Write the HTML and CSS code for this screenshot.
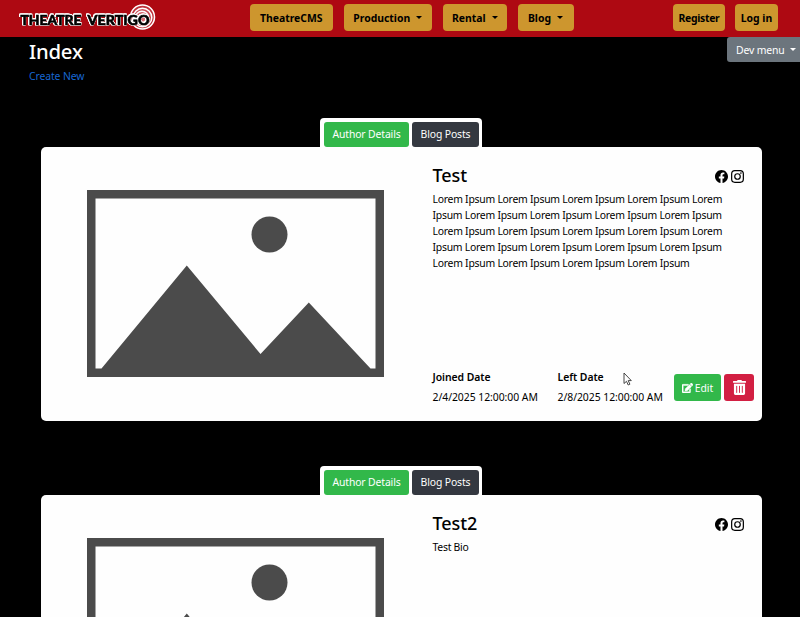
FILE: index.html
```
<!DOCTYPE html>
<html lang="en">
<head>
<meta charset="utf-8">
<title>Index - TheatreCMS</title>
<link rel="stylesheet" href="styles.css">
</head>
<body>
<svg class="sprite" aria-hidden="true">
  <symbol id="facebook" viewBox="0 0 16 16"><path d="M16 8.05C16 3.6 12.42 0 8 0S0 3.6 0 8.05C0 12.07 2.93 15.4 6.75 16v-5.62H4.72V8.05h2.03V6.28c0-2.02 1.2-3.13 3.02-3.13.88 0 1.79.16 1.79.16v1.98h-1.01c-.99 0-1.3.62-1.3 1.26v1.5h2.22l-.35 2.33H9.25V16C13.07 15.4 16 12.07 16 8.05z"/></symbol>
  <symbol id="instagram" viewBox="0 0 16 16"><rect x=".8" y=".8" width="14.4" height="14.4" rx="4" fill="none" stroke="#000" stroke-width="1.5"/><circle cx="8" cy="8" r="3.4" fill="none" stroke="#000" stroke-width="1.5"/><circle cx="12.2" cy="3.8" r="1"/></symbol>
  <symbol id="placeholder" viewBox="0 0 297 187"><path fill="#4b4b4b" fill-rule="evenodd" d="M0 0H297V187H0ZM8.500 8.500V178.500H14.500L99.800 75.500L173.500 164L221.800 112.500L283.500 178.500H288.500V8.500Z"/><circle cx="182.500" cy="44.500" r="18" fill="#4b4b4b"/></symbol>
  <symbol id="edit" viewBox="0 0 576 512"><path d="M402.600 83.200l90.200 90.200c3.800 3.800 3.800 10 0 13.800L274.400 405.600l-92.800 10.300c-12.400 1.400-22.900-9.100-21.500-21.500l10.300-92.800L388.800 83.200c3.800-3.800 10-3.800 13.800 0zm162-22.900l-48.800-48.800c-15.200-15.200-39.900-15.200-55.200 0l-35.400 35.400c-3.800 3.800-3.800 10 0 13.800l90.200 90.200c3.800 3.800 10 3.800 13.800 0l35.400-35.400c15.200-15.300 15.200-40 0-55.200zM384 346.200V448H64V128h229.800c3.200 0 6.200-1.300 8.500-3.500l40-40c7.600-7.600 2.200-20.500-8.500-20.500H48C21.500 64 0 85.500 0 112v352c0 26.500 21.500 48 48 48h352c26.500 0 48-21.500 48-48V306.200c0-10.700-12.900-16-20.500-8.500l-40 40c-2.200 2.300-3.500 5.300-3.500 8.500z" stroke="#fff" stroke-width="22"/></symbol>
  <symbol id="trash" viewBox="0 0 448 512"><path d="M32 464a48 48 0 0 0 48 48h288a48 48 0 0 0 48-48V128H32zm272-256a16 16 0 0 1 32 0v224a16 16 0 0 1-32 0zm-96 0a16 16 0 0 1 32 0v224a16 16 0 0 1-32 0zm-96 0a16 16 0 0 1 32 0v224a16 16 0 0 1-32 0zM432 32H312l-9.400-18.700A24 24 0 0 0 281.100 0H166.800a23.700 23.700 0 0 0-21.400 13.300L136 32H16A16 16 0 0 0 0 48v32a16 16 0 0 0 16 16h416a16 16 0 0 0 16-16V48a16 16 0 0 0-16-16z"/></symbol>
</svg>

<header class="navbar">
  <svg class="logo" viewBox="0 0 140 32" role="img" aria-label="Theatre Vertigo">
    <g fill="#e0808a" fill-opacity=".35" stroke="#fff">
      <circle cx="124.500" cy="15" r="12" stroke-width="1.500"/>
      <circle cx="124.500" cy="15.500" r="9.300" stroke-width="1.500"/>
      <circle cx="124" cy="16" r="6.700" stroke-width="1.500"/>
      <circle cx="124" cy="16.500" r="4" stroke-width="1.400"/>
    </g>
    <path class="halo" d="M3 12.500H63V22.500H5M71 12.500H132V22.500H74"/>
    <text class="logo-text" x="2.500" y="22.500" textLength="61" lengthAdjust="spacingAndGlyphs">THEATRE</text>
    <text class="logo-text" x="69.500" y="22.500" textLength="62" lengthAdjust="spacingAndGlyphs">VERTIGO</text>
  </svg>
  <nav class="links">
    <a class="gold cms"><span>TheatreCMS</span></a>
    <a class="gold production"><span>Production</span><i class="caret"></i></a>
    <a class="gold rental"><span>Rental</span><i class="caret"></i></a>
    <a class="gold blog"><span>Blog</span><i class="caret"></i></a>
  </nav>
  <nav class="account">
    <a class="gold register"><span>Register</span></a>
    <a class="gold login"><span>Log in</span></a>
  </nav>
</header>
<div class="dev-menu"><span>Dev menu</span><i class="caret"></i></div>

<main>
  <h1>Index</h1>
  <a class="create">Create New</a>

  <section class="author">
    <div class="tabs"><a class="tab active">Author Details</a><a class="tab posts">Blog Posts</a></div>
    <article class="card">
      <div class="picture"><svg><use href="#placeholder"/></svg></div>
      <div class="details">
        <div class="heading"><h2>Test</h2><div class="social"><svg><use href="#facebook"/></svg><svg><use href="#instagram"/></svg></div></div>
        <p class="bio">Lorem Ipsum Lorem Ipsum Lorem Ipsum Lorem Ipsum Lorem<br>Ipsum Lorem Ipsum Lorem Ipsum Lorem Ipsum Lorem Ipsum<br>Lorem Ipsum Lorem Ipsum Lorem Ipsum Lorem Ipsum Lorem<br>Ipsum Lorem Ipsum Lorem Ipsum Lorem Ipsum Lorem Ipsum<br>Lorem Ipsum Lorem Ipsum Lorem Ipsum Lorem Ipsum</p>
        <div class="bottom">
          <dl class="date"><dt>Joined Date</dt><dd>2/4/2025 12:00:00 AM</dd></dl>
          <dl class="date"><dt>Left Date</dt><dd>2/8/2025 12:00:00 AM</dd></dl>
          <a class="edit"><svg><use href="#edit"/></svg><span>Edit</span></a>
          <a class="delete" aria-label="Delete"><svg><use href="#trash"/></svg></a>
        </div>
      </div>
    </article>
  </section>

  <section class="author">
    <div class="tabs"><a class="tab active">Author Details</a><a class="tab posts">Blog Posts</a></div>
    <article class="card">
      <div class="picture"><svg><use href="#placeholder"/></svg></div>
      <div class="details">
        <div class="heading"><h2>Test2</h2><div class="social"><svg><use href="#facebook"/></svg><svg><use href="#instagram"/></svg></div></div>
        <p class="bio">Test Bio</p>
      </div>
    </article>
  </section>
</main>
<svg class="cursor" viewBox="0 0 9 14"><path d="M1 1V11.500L3.500 9.300L5.200 13L6.900 12.200L5.200 8.600H8.300Z" fill="#fff" stroke="#333" stroke-width=".9"/></svg>
</body>
</html>
```

FILE: styles.css
```
* { box-sizing: border-box; }
body {
  margin: 0;
  height: 617px;
  overflow: hidden;
  background: #000;
  color: #000;
  font: 10.4px/16px "Noto Sans", "Open Sans", sans-serif;
  white-space: nowrap;
}
h1, h2, p, dl, dd { margin: 0; }
.sprite { display: none; }

.navbar {
  display: flex;
  align-items: flex-start;
  height: 37px;
  padding: 4px 22px 0 18px;
  background: #ae0912;
}
.logo { width: 140px; height: 32px; margin-top: -2px; }
.logo-text {
  font: 900 14px Lato, sans-serif;
  fill: #000;
  stroke: #000;
  stroke-width: .6px;
  filter: drop-shadow(.8px 0 0 #fff) drop-shadow(-.8px 0 0 #fff) drop-shadow(0 .8px 0 #fff) drop-shadow(0 -.8px 0 #fff);
}
.halo { display: none; }
.links { display: flex; gap: 10.5px; margin-left: 91.5px; }
.account { display: flex; gap: 10px; margin-left: auto; }
.gold {
  display: flex;
  align-items: center;
  justify-content: center;
  gap: 6px;
  height: 27px;
  border-radius: 4px;
  background: #cd962e;
  font-weight: 700;
}
.cms { width: 83.5px; }
.production { width: 88.5px; }
.rental { width: 64.5px; }
.blog { width: 56px; }
.register { width: 52px; letter-spacing: -.3px; }
.login { width: 43px; }
.caret {
  border: 3px solid transparent;
  border-top-color: currentColor;
  border-bottom: 0;
}
.dev-menu {
  position: absolute;
  top: 37px;
  right: 0;
  display: flex;
  align-items: center;
  gap: 5px;
  width: 73px;
  height: 25px;
  padding-left: 9px;
  border-radius: 3px 0 0 3px;
  background: #6c757d;
  color: #fff;
  letter-spacing: -.12px;
}

main { padding: 0 38px 0 41px; }
h1 {
  margin-left: -12px;
  padding-top: 2px;
  color: #fff;
  font-size: 20.3px;
  line-height: 24px;
  font-weight: 500;
  letter-spacing: -.2px;
}
.create { display: block; margin: 5px 0 0 -12px; color: #1767d2; letter-spacing: -.1px; }
.author { margin-top: 34px; }
.author + .author { margin-top: 45px; }
.tabs {
  display: flex;
  gap: 3px;
  width: 162px;
  height: 29px;
  margin-left: 279px;
  padding: 4px 3px 0 4px;
  border-radius: 4px 4px 0 0;
  background: #fff;
}
.tab {
  height: 25px;
  border-radius: 3px;
  line-height: 25px;
  text-align: center;
  color: #fff;
  letter-spacing: -.13px;
}
.active { width: 85px; background: #32b84a; }
.posts { width: 67px; background: #343840; }
.card {
  display: flex;
  height: 274px;
  border-radius: 5px;
  background: #fefefe;
}
.picture { width: 391px; padding: 43px 0 0 46px; }
.picture svg { display: block; width: 297px; height: 187px; }
.details { display: flex; flex-direction: column; width: 330px; padding: 15px 8px 14px 0; }
.heading { display: flex; justify-content: space-between; height: 29px; }
h2 { font-size: 18px; line-height: 26px; font-weight: 500; letter-spacing: -.1px; padding-left: .5px; }
.bio { padding-left: .5px; letter-spacing: -.245px; }
.social { display: flex; gap: 3px; padding: 8px 10px 0 0; }
.social svg { width: 13px; height: 13px; }
.bottom { display: flex; align-items: flex-end; margin-top: auto; }
.date { width: 125px; padding-left: .5px; letter-spacing: -.04px; }
.date + .date { width: 117px; }
dt { font-weight: 600; line-height: 19px; }
dd { line-height: 20px; }
.edit, .delete {
  display: flex;
  align-items: center;
  justify-content: center;
  height: 27px;
  margin-bottom: 6px;
  border-radius: 3px;
  color: #fff;
  fill: #fff;
}
.edit { gap: 2px; width: 47px; background: #32b84a; }
.edit svg { width: 11px; height: 10px; }
.delete { width: 30px; margin-left: 3px; background: #d21f42; }
.delete svg { width: 13px; height: 15px; }
.cursor { position: absolute; left: 623px; top: 372px; width: 9px; height: 14px; }
```
